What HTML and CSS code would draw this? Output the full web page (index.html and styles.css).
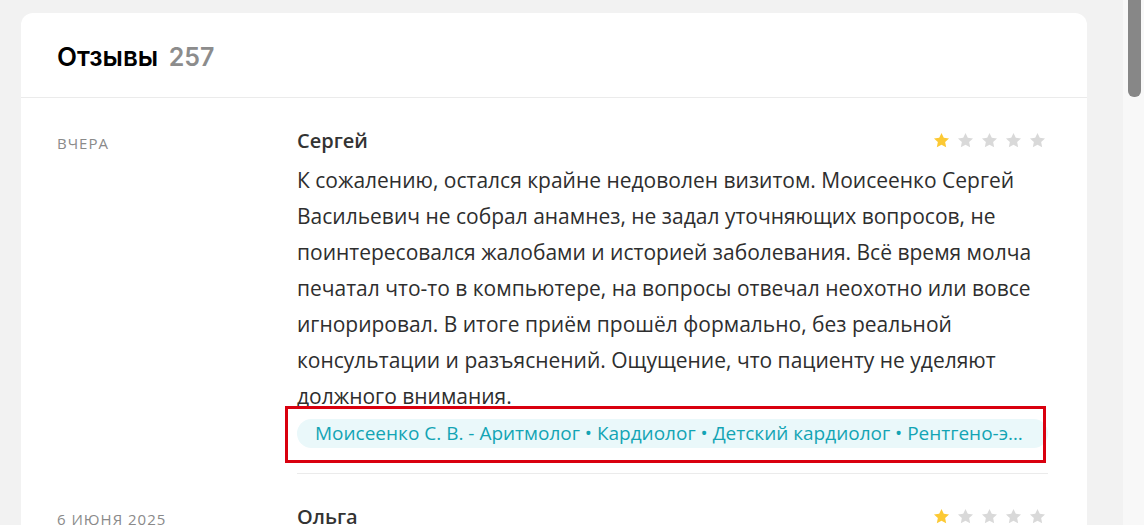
FILE: index.html
```html
<!DOCTYPE html>
<html>
<head>
    <title>Отзывы</title>
    <link rel="stylesheet" href="styles.css">
</head>
<body>
    <div class="page">
        <div class="reviews">
            <div class="reviews-header">
                <h2>Отзывы <span class="count">257</span></h2>
            </div>

            <div class="review">
                <div class="review-date">Вчера</div>
                <div class="review-main">
                    <div class="review-top">
                        <div class="review-author">Сергей</div>
                        <div class="stars">
                            <svg class="star on" viewBox="0 0 24 24"><path d="M12 2.5l2.9 6.1 6.6.8-4.9 4.6 1.3 6.6L12 17.3l-5.9 3.3 1.3-6.6-4.9-4.6 6.6-.8z"/></svg>
                            <svg class="star" viewBox="0 0 24 24"><path d="M12 2.5l2.9 6.1 6.6.8-4.9 4.6 1.3 6.6L12 17.3l-5.9 3.3 1.3-6.6-4.9-4.6 6.6-.8z"/></svg>
                            <svg class="star" viewBox="0 0 24 24"><path d="M12 2.5l2.9 6.1 6.6.8-4.9 4.6 1.3 6.6L12 17.3l-5.9 3.3 1.3-6.6-4.9-4.6 6.6-.8z"/></svg>
                            <svg class="star" viewBox="0 0 24 24"><path d="M12 2.5l2.9 6.1 6.6.8-4.9 4.6 1.3 6.6L12 17.3l-5.9 3.3 1.3-6.6-4.9-4.6 6.6-.8z"/></svg>
                            <svg class="star" viewBox="0 0 24 24"><path d="M12 2.5l2.9 6.1 6.6.8-4.9 4.6 1.3 6.6L12 17.3l-5.9 3.3 1.3-6.6-4.9-4.6 6.6-.8z"/></svg>
                        </div>
                    </div>
                    <p class="review-text">К сожалению, остался крайне недоволен визитом. Моисеенко Сергей Васильевич не собрал анамнез, не задал уточняющих вопросов, не поинтересовался жалобами и историей заболевания. Всё время молча печатал что-то в компьютере, на вопросы отвечал неохотно или вовсе игнорировал. В итоге приём прошёл формально, без реальной консультации и разъяснений. Ощущение, что пациенту не уделяют должного внимания.</p>
                    <div class="review-doctor">
                        <a class="doctor-tag" href="#">Моисеенко С. В. - Аритмолог • Кардиолог • Детский кардиолог • Рентгено-эндоваскулярный хирург • Сердечно-сосудистый хирург</a>
                        <div class="highlight"></div>
                    </div>
                </div>
            </div>

            <div class="review">
                <div class="review-date">6 июня 2025</div>
                <div class="review-main">
                    <div class="review-top">
                        <div class="review-author">Ольга</div>
                        <div class="stars">
                            <svg class="star on" viewBox="0 0 24 24"><path d="M12 2.5l2.9 6.1 6.6.8-4.9 4.6 1.3 6.6L12 17.3l-5.9 3.3 1.3-6.6-4.9-4.6 6.6-.8z"/></svg>
                            <svg class="star" viewBox="0 0 24 24"><path d="M12 2.5l2.9 6.1 6.6.8-4.9 4.6 1.3 6.6L12 17.3l-5.9 3.3 1.3-6.6-4.9-4.6 6.6-.8z"/></svg>
                            <svg class="star" viewBox="0 0 24 24"><path d="M12 2.5l2.9 6.1 6.6.8-4.9 4.6 1.3 6.6L12 17.3l-5.9 3.3 1.3-6.6-4.9-4.6 6.6-.8z"/></svg>
                            <svg class="star" viewBox="0 0 24 24"><path d="M12 2.5l2.9 6.1 6.6.8-4.9 4.6 1.3 6.6L12 17.3l-5.9 3.3 1.3-6.6-4.9-4.6 6.6-.8z"/></svg>
                            <svg class="star" viewBox="0 0 24 24"><path d="M12 2.5l2.9 6.1 6.6.8-4.9 4.6 1.3 6.6L12 17.3l-5.9 3.3 1.3-6.6-4.9-4.6 6.6-.8z"/></svg>
                        </div>
                    </div>
                    <p class="review-text">Врач внимательный, всё подробно объяснил.</p>
                </div>
            </div>
        </div>
    </div>
    <div class="scrollbar"><div class="scrollbar-thumb"></div></div>
</body>
</html>
```

FILE: styles.css
```css
html, body {
    height: 100%;
    overflow: hidden;
}

body {
    margin: 0;
    background: #f2f2f2;
    font-family: "Open Sans", "Noto Sans", sans-serif;
    color: #2e2e2e;
}

.page {
    padding: 13px 57px 0 21px;
}

.reviews {
    background: #fff;
    border-radius: 12px;
}

.reviews-header {
    padding: 0 36px;
    height: 84px;
    display: flex;
    align-items: center;
    border-bottom: 1px solid #ebebeb;
}

.reviews-header h2 {
    margin: 0;
    font-family: Inter, "Noto Sans", sans-serif;
    font-size: 26px;
    font-weight: 600;
    color: #000;
    padding-top: 2px;
}

.count {
    color: #8c8c8c;
    margin-left: 4px;
    font-size: 25px;
}

.review {
    display: flex;
    padding: 0 39px 0 36px;
}

.review-date {
    width: 240px;
    flex-shrink: 0;
    padding-top: 35px;
    font-size: 15px;
    letter-spacing: 1px;
    text-transform: uppercase;
    color: #8a8a8a;
}

.review-main {
    flex: 1;
    min-width: 0;
    padding-top: 29px;
    border-bottom: 1px solid #ebebeb;
}

.review-top {
    display: flex;
    justify-content: space-between;
    align-items: center;
}

.review-author {
    font-size: 20px;
    font-weight: 600;
    color: #333;
}

.stars {
    display: flex;
    gap: 5px;
    padding-right: 1px;
}

.star {
    width: 19px;
    height: 19px;
    fill: #d9d9d9;
}

.star.on {
    fill: #fcc934;
}

.review-text {
    margin: 8px 0 0;
    font-size: 21px;
    line-height: 36px;
}

.review-doctor {
    position: relative;
    padding: 5px 0 25px;
}

.doctor-tag {
    display: block;
    background: #eaf8fa;
    color: #13a4b4;
    text-decoration: none;
    font-size: 19px;
    line-height: 29px;
    padding: 0 18px;
    border-radius: 15px;
    white-space: nowrap;
    overflow: hidden;
    text-overflow: ellipsis;
}

.highlight {
    position: absolute;
    left: -12px;
    right: 2px;
    top: -8px;
    bottom: 10px;
    border: 3px solid #d9000f;
}

.scrollbar {
    position: fixed;
    top: 0;
    right: 0;
    bottom: 0;
    width: 21px;
    background: #f8f8f8;
}

.scrollbar-thumb {
    margin: 0 3px 0 5px;
    height: 97px;
    background: #878787;
    border-radius: 0 0 6px 6px;
}
```
